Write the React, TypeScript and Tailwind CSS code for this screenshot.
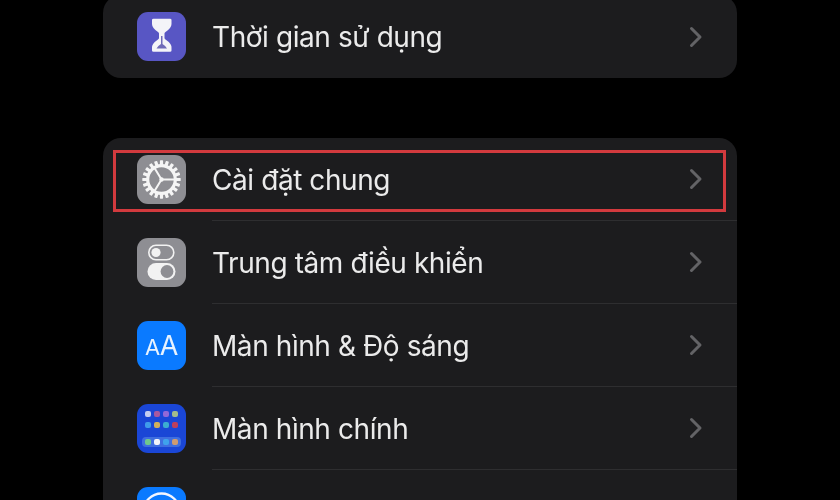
import type { ReactNode } from "react";

function Chevron() {
  return (
    <svg width="14" height="22" viewBox="0 0 14 22" fill="none" className="shrink-0">
      <path
        d="M2.5 2.5 L11 11 L2.5 19.5"
        stroke="#636366"
        strokeWidth="3"
        strokeLinecap="round"
        strokeLinejoin="round"
      />
    </svg>
  );
}

function Hourglass() {
  return (
    <svg width="49" height="49" viewBox="0 0 49 49">
      <path
        d="M15 8 Q15 6.8 16.5 6.8 H33 Q34.5 6.8 34.5 8 V12 Q34.5 16 28.5 20 Q27.5 20.7 27.5 21.5 V26 Q27.5 26.8 28.5 27.5 Q34.5 31.5 34.5 35.5 V38.5 Q34.5 39.8 33 39.8 H16.5 Q15 39.8 15 38.5 V35.5 Q15 31.5 21 27.5 Q22 26.8 22 26 V21.5 Q22 20.7 21 20 Q15 16 15 12 Z"
        fill="#f4f4f8"
      />
      <path d="M24 24 H25.5 V32 Q28.5 33.5 30 36.5 H19.5 Q21 33.5 24 32 Z" fill="#6f6bb8" />
    </svg>
  );
}

function Gear() {
  const teeth = Array.from({ length: 20 }, (_, i) => i * 18);
  return (
    <svg width="49" height="49" viewBox="0 0 49 49">
      {teeth.map((a) => (
        <rect key={a} x="22.9" y="5.3" width="3.2" height="6" rx="0.7" fill="#f5f5f5" transform={`rotate(${a} 24.5 24.5)`} />
      ))}
      <circle cx="24.5" cy="24.5" r="13.8" fill="none" stroke="#f5f5f5" strokeWidth="3.2" />
      <circle cx="24.5" cy="24.5" r="2.2" fill="#f5f5f5" />
      <path d="M24.5 24.5 L17.5 13 M24.5 24.5 H38 M24.5 24.5 L17.5 36" stroke="#f5f5f5" strokeWidth="2" />
    </svg>
  );
}

function Switches() {
  return (
    <svg width="49" height="49" viewBox="0 0 49 49">
      <rect x="11.8" y="7.3" width="25" height="14.4" rx="7.2" fill="none" stroke="#f2f2f2" strokeWidth="1.6" />
      <circle cx="19" cy="14.5" r="4.6" fill="#f2f2f2" />
      <rect x="10.5" y="25" width="28" height="17" rx="8.5" fill="#f2f2f2" />
      <circle cx="30" cy="33.5" r="6.4" fill="#8e8e93" />
    </svg>
  );
}

function HomeScreen() {
  const top = ["#c5cdf0", "#a8589f", "#9168d8", "#a3bb8c"];
  const mid = ["#3f9bea", "#d0ae5c", "#3cacd0", "#bd3f5c"];
  const dock = ["#6fc98c", "#f2f4fb", "#3fa2ec", "#d09c70"];
  const Dots = ({ colors }: { colors: string[] }) => (
    <div className="flex gap-[3px]">
      {colors.map((c, i) => (
        <div key={i} className="w-[6px] h-[6px] rounded-[2px]" style={{ backgroundColor: c }} />
      ))}
    </div>
  );
  return (
    <div className="flex flex-col items-center gap-[5px] pt-[1px]">
      <Dots colors={top} />
      <Dots colors={mid} />
      <div className="mt-[4px] px-[3px] py-[2px] rounded-[4px] bg-[#3f6ee0]">
        <Dots colors={dock} />
      </div>
    </div>
  );
}

function Accessibility() {
  return (
    <svg width="49" height="49" viewBox="0 0 49 49">
      <circle cx="24.5" cy="24.5" r="18" fill="none" stroke="#f2f6ff" strokeWidth="2.4" />
    </svg>
  );
}

function IconBox({ className, children }: { className: string; children: ReactNode }) {
  return (
    <div className={`w-[49px] h-[49px] shrink-0 rounded-[11px] flex items-center justify-center ${className}`}>
      {children}
    </div>
  );
}

function Row({ icon, label, last }: { icon: ReactNode; label: string; last?: boolean }) {
  return (
    <div className="h-[83px] flex items-center pl-[34px]">
      {icon}
      <div className={`ml-[26px] flex-1 h-full flex items-center pr-[34px] ${last ? "" : "border-b border-[#2e2e30]"}`}>
        <span className="flex-1 pt-[1px] text-[28px] tracking-[-0.42px] text-[#ebebeb]">{label}</span>
        <Chevron />
      </div>
    </div>
  );
}

export default function App() {
  return (
    <div
      className="h-[500px] overflow-hidden bg-black px-[103px] blur-[0.4px]"
      style={{ fontFamily: "Inter, 'Noto Sans', sans-serif" }}
    >
      <div className="-mt-[5px] mb-[60px] rounded-[18px] bg-[#1c1c1e]">
        <Row
          last
          label="Thời gian sử dụng"
          icon={
            <IconBox className="bg-[#5856c4]">
              <Hourglass />
            </IconBox>
          }
        />
      </div>

      <div className="relative rounded-[18px] bg-[#1c1c1e]">
        <Row
          label="Cài đặt chung"
          icon={
            <IconBox className="bg-[#8e8e93]">
              <Gear />
            </IconBox>
          }
        />
        <Row
          label="Trung tâm điều khiển"
          icon={
            <IconBox className="bg-[#8e8e93]">
              <Switches />
            </IconBox>
          }
        />
        <Row
          label="Màn hình & Độ sáng"
          icon={
            <IconBox className="bg-[#0a7aff]">
              <span className="text-[#e8f3ff] leading-none tracking-[-0.5px]">
                <span className="text-[22px]">A</span>
                <span className="text-[27px]">A</span>
              </span>
            </IconBox>
          }
        />
        <Row
          label="Màn hình chính"
          icon={
            <IconBox className="bg-[#1a46d6]">
              <HomeScreen />
            </IconBox>
          }
        />
        <Row
          last
          label="Trợ năng"
          icon={
            <IconBox className="bg-[#0a7aff]">
              <Accessibility />
            </IconBox>
          }
        />

        {/* red highlight drawn over the first row */}
        <div className="absolute left-[10px] top-[12px] w-[613px] h-[62px] border-[3px] border-[#d23a3e] pointer-events-none" />
      </div>
    </div>
  );
}
